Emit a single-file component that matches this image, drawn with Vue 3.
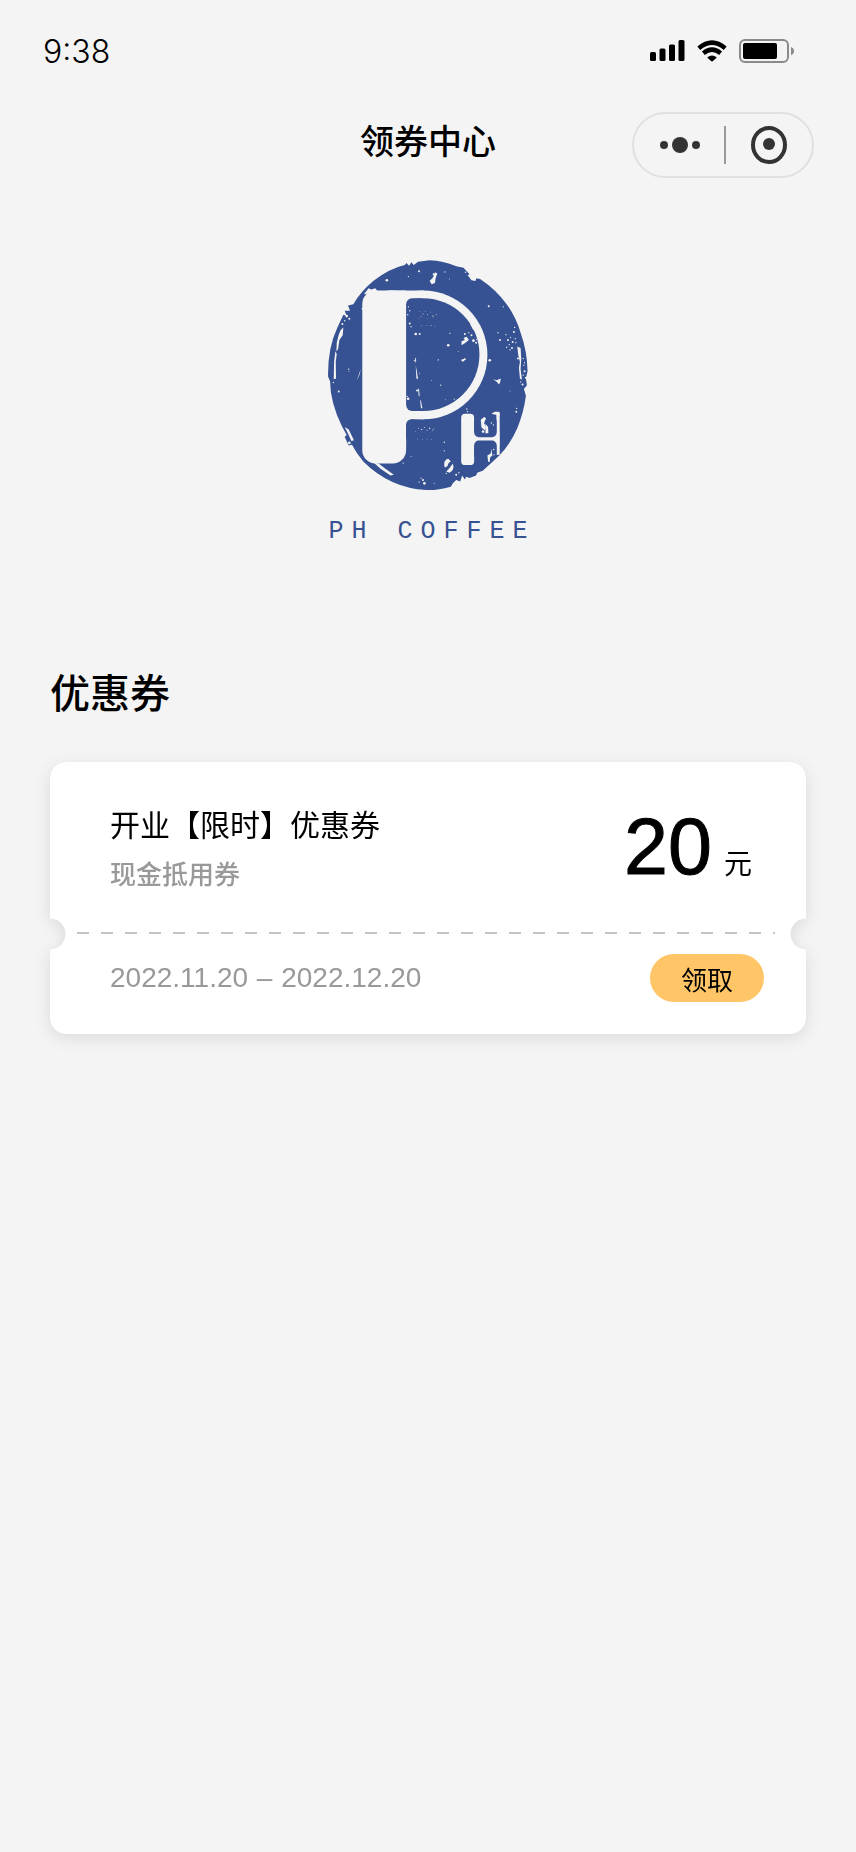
<template>
  <div class="page">
    <div class="status-bar">
      <span class="time">9:38</span>
      <div class="status-icons">
        <svg width="35" height="22" viewBox="0 0 35 22">
          <rect x="0" y="12" width="6" height="9" rx="1.5" />
          <rect x="9.5" y="8.5" width="6" height="12.5" rx="1.5" />
          <rect x="19" y="4.5" width="6" height="16.5" rx="1.5" />
          <rect x="28.5" y="0" width="6" height="21" rx="1.5" />
        </svg>
        <svg width="30" height="22" viewBox="0 0 30 22">
          <g fill="none" stroke="#000" stroke-width="4.4">
            <path d="M1.8 8.2 Q15 -3 28.2 8.2" />
            <path d="M6.4 13.2 Q15 6 23.6 13.2" />
          </g>
          <path d="M10.2 17.4 Q15 13.4 19.8 17.4 L16 21 Q15 21.8 14 21 Z" />
        </svg>
        <svg width="56" height="24" viewBox="0 0 56 24">
          <rect x="1" y="1" width="48" height="22" rx="5" fill="none" stroke="#8a8a8a" stroke-width="2" />
          <rect x="4" y="4" width="34" height="16" rx="2" />
          <path d="M52 8 Q55 9 55 12 Q55 15 52 16 Z" fill="#8a8a8a" />
        </svg>
      </div>
    </div>

    <header class="nav">
      <h1 class="nav-title">领券中心</h1>
      <div class="capsule">
        <button type="button" class="capsule-btn" aria-label="更多">
          <svg width="40" height="16" viewBox="0 0 40 16" fill="#333">
            <circle cx="4" cy="8" r="4" />
            <circle cx="20" cy="8" r="8" />
            <circle cx="36" cy="8" r="4" />
          </svg>
        </button>
        <span class="capsule-line"></span>
        <button type="button" class="capsule-btn" aria-label="关闭">
          <svg width="36" height="38" viewBox="0 0 36 38" fill="#333">
            <ellipse cx="18" cy="19" rx="16" ry="17" fill="none" stroke="#333" stroke-width="4" />
            <circle cx="18" cy="18" r="6" />
          </svg>
        </button>
      </div>
    </header>

    <main class="content">
      <div class="brand">
        <svg class="brand-mark" viewBox="54 43 602 696" role="img" aria-label="PH">
          <defs>
            <clipPath id="bowl">
              <rect x="310" y="120" width="240" height="420" />
            </clipPath>
          </defs>
          <!-- stamp -->
          <path
            fill="#365292"
            d="M360 44 Q400 46 440 62 L462 66 L478 84 L484 94 L500 98 L512 100 Q560 132 592 176 Q620 215 634 262 Q654 318 655 378 L650 400 L653 420 L644 432 L650 452 Q644 500 624 550 Q604 596 570 632 L520 678 L503 684 L500 692 L480 700 L470 696 L466 704 L458 692 L452 710 L440 706 L430 716 L424 726 Q380 738 350 736 Q240 730 160 650 Q138 624 126 600 L116 602 L104 576 L110 570 L96 545 Q60 470 60 408 L54 395 Q52 310 82 246 L100 208 L110 212 L104 196 L120 196 L114 180 L130 176 Q150 140 190 106 Q240 68 285 58 L290 52 L298 60 L305 50 L312 58 L325 48 Z"
          />
          <!-- bowl and stem -->
          <g fill="#f4f4f4">
            <circle cx="340" cy="329" r="194" clip-path="url(#bowl)" />
            <rect x="230" y="135" width="112" height="388" />
            <rect x="280" y="515" width="26" height="26" />
            <rect x="157" y="135" width="132" height="521" rx="40" />
            <rect x="240" y="135" width="49" height="470" />
          </g>
          <g fill="#365292">
            <circle cx="340" cy="328" r="170" clip-path="url(#bowl)" />
            <rect x="289" y="158" width="60" height="340" rx="18" />
            <rect x="289" y="523" width="36" height="70" rx="16" />
          </g>
          <!-- small monogram letter -->
          <g fill="#f4f4f4">
            <rect x="455" y="506" width="39" height="155" rx="12" />
            <rect x="486" y="560" width="84" height="44" />
            <rect x="561" y="502" width="10" height="128" />
            <path d="M546 506 L556 500 L569 500 L571 512 L562 510 Z" />
          </g>
          <g fill="#365292">
            <rect x="494" y="516" width="68" height="61" rx="14" />
            <rect x="494" y="587" width="68" height="54" rx="14" />
          </g>
          <!-- wear marks -->
          <g fill="#f4f4f4">
            <path d="M100 246 L98 270 L88 284 L84 312 L79 318 L80 292 L86 268 L92 254 Z" />
            <path d="M76 318 L80 326 L77 350 L78 400 L71 402 L72 350 Z" />
            <path d="M104 546 L116 554 L132 586 L124 588 L114 566 Z" />
            <path d="M192 654 L206 656 L230 674 L252 690 L242 692 L212 672 Z" />
            <path d="M376 80 L383 84 L378 98 L376 112 L366 116 L360 106 L370 96 Z" />
            <path d="M474 88 L486 86 L494 96 L502 94 L498 106 L486 104 Z" />
            <path d="M456 288 L466 284 L462 278 L472 274 L478 284 L468 292 L456 300 Z" />
            <path d="M552 402 L562 405 L574 400 L573 410 L569 418 L562 410 Z" />
            <path d="M624 304 L634 308 L636 340 L634 372 L638 404 L632 400 L629 368 L632 350 L627 330 Z" />
            <path d="M514 524 L524 516 L530 520 L524 534 L530 548 L526 556 L516 548 Z" />
            <path d="M528 536 L536 546 L537 564 L528 566 Z" />
            <path d="M534 632 L544 626 L546 612 L549 632 L542 638 L541 652 L536 650 Z" />
            <path d="M404 664 Q402 644 416 642 L424 650 Q416 652 414 664 L406 668 Z" />
            <path d="M430 656 Q436 676 420 684 L410 680 L420 670 Z" />
            <path d="M162 146 L176 128 L184 132 L196 128 L204 138 L180 144 Z" />
            <path d="M152 372 L149 388 L140 406 L146 390 Z" />
            <path d="M482 236 L494 238 L502 258 L490 252 Z" />
            <path d="M316 338 L319 339 L319 352 L317 352 Z" />
            <path d="M318 360 L321 376 L325 402 L320 400 L319 380 Z" />
            <path d="M325 430 L328 432 L330 454 L327 452 Z" />
            <path d="M331 464 L334 468 L338 490 L334 490 Z" />
            <circle v-for="(s, i) in specks" :key="i" :cx="s[0]" :cy="s[1]" :r="s[2]" />
          </g>
        </svg>
        <p class="brand-name">PH COFFEE</p>
      </div>

      <section>
        <h2 class="section-title">优惠券</h2>
        <div v-for="c in coupons" :key="c.id" class="coupon-wrap">
          <article class="coupon">
            <div class="coupon-top">
              <div>
                <h3 class="coupon-name">{{ c.name }}</h3>
                <p class="coupon-type">{{ c.type }}</p>
              </div>
              <p class="coupon-price"><span class="amount">{{ c.amount }}</span>元</p>
            </div>
            <div class="coupon-line"></div>
            <div class="coupon-bottom">
              <span class="coupon-date">{{ c.start }} <span class="dash">–</span> {{ c.end }}</span>
              <button type="button" class="claim-btn">领取</button>
            </div>
          </article>
        </div>
      </section>
    </main>
  </div>
</template>

<script setup>
import { ref } from 'vue'

const coupons = ref([
  { id: 1, name: '开业【限时】优惠券', type: '现金抵用券', amount: 20, start: '2022.11.20', end: '2022.12.20' }
])

// x, y, radius of the small chips in the stamp
const specks = [
  [231, 104, 4], [296, 93, 2], [328, 77, 3], [406, 79, 2], [420, 100, 1.5], [372, 86, 3],
  [538, 182, 3], [582, 184, 2], [110, 212, 4], [118, 220, 3], [97, 236, 3], [104, 226, 2],
  [296, 184, 2], [300, 196, 2], [294, 208, 2], [330, 198, 1], [340, 206, 1.5], [334, 214, 1.5],
  [348, 198, 1], [354, 208, 1.5], [362, 200, 1], [370, 212, 2], [380, 208, 1.5], [352, 220, 1],
  [336, 240, 1], [350, 240, 1], [364, 240, 1.5], [376, 242, 1], [300, 234, 3], [304, 244, 2],
  [318, 266, 4], [330, 266, 3], [326, 220, 1], [416, 300, 4], [386, 344, 2], [421, 264, 2],
  [446, 318, 1.5], [460, 345, 4], [466, 342, 3], [492, 286, 4], [500, 292, 3], [486, 270, 3],
  [466, 266, 3], [478, 262, 2], [502, 282, 2], [541, 345, 4], [526, 318, 2], [566, 262, 2],
  [572, 284, 3], [590, 268, 2], [596, 284, 3], [604, 276, 2], [610, 290, 3], [600, 298, 2],
  [592, 306, 2], [614, 260, 3], [618, 280, 2], [620, 292, 2], [608, 308, 3], [602, 314, 2],
  [616, 246, 2], [626, 340, 3], [642, 340, 2], [644, 360, 2], [646, 378, 3], [642, 390, 2],
  [650, 398, 3], [640, 418, 3], [634, 410, 2], [646, 352, 2], [621, 500, 3], [622, 490, 2],
  [602, 438, 1.5], [86, 439, 3], [116, 372, 2], [117, 378, 1.5], [70, 412, 2], [118, 594, 4],
  [295, 461, 4], [292, 454, 2], [393, 420, 2], [366, 406, 1.5], [434, 462, 2], [408, 464, 1.5],
  [330, 384, 1.5], [322, 436, 3], [314, 346, 2], [326, 550, 1.5], [336, 554, 2], [344, 548, 1.5],
  [352, 556, 1.5], [360, 550, 2], [368, 556, 1.5], [318, 560, 1], [324, 582, 1], [338, 584, 1],
  [352, 582, 1], [366, 584, 1], [372, 552, 1.5], [404, 592, 2], [404, 618, 2], [472, 492, 2],
  [474, 500, 2], [546, 534, 2], [552, 540, 2], [553, 614, 2], [554, 630, 2], [521, 560, 4],
  [340, 706, 3], [344, 716, 4], [328, 712, 2], [334, 700, 2], [280, 655, 2], [304, 634, 1.5],
  [440, 690, 3], [448, 684, 2], [410, 686, 2], [374, 716, 1.5], [468, 80, 2], [158, 190, 3]
]
</script>

<style>
body {
  background: #f4f4f4;
}
</style>

<style scoped>
.page {
  min-height: 100vh;
  background: #f4f4f4;
  color: #000;
  font-family: "Liberation Sans", "Noto Sans CJK SC", sans-serif;
}

h1,
h2,
h3,
p {
  margin: 0;
}

button {
  padding: 0;
  border: none;
  background: none;
  font-family: inherit;
  color: inherit;
  cursor: pointer;
}

svg {
  display: block;
}

/* Status bar */
.status-bar {
  display: flex;
  align-items: center;
  justify-content: space-between;
  height: 102px;
  padding: 0 61px 0 43px;
}

.time {
  font-family: Inter, "Liberation Sans", sans-serif;
  font-size: 32px;
  font-weight: 300;
}

.status-icons {
  display: flex;
  align-items: center;
  gap: 12px;
}

/* Nav */
.nav {
  display: grid;
  grid-template-columns: 1fr auto 1fr;
  align-items: center;
  padding: 10px 42px 0;
}

.nav-title {
  grid-column: 2;
  padding-bottom: 6px;
  font-size: 34px;
  line-height: 48px;
  font-weight: 500;
}

.capsule {
  justify-self: end;
  display: flex;
  align-items: center;
  box-sizing: border-box;
  width: 182px;
  height: 66px;
  padding-left: 3px;
  border: 2px solid #e0e0e0;
  border-radius: 33px;
}

.capsule-btn {
  flex: 1;
  display: flex;
  justify-content: center;
}

.capsule-line {
  width: 2px;
  height: 38px;
  background: #999;
}

.content {
  padding: 82px 50px;
}

/* Brand */
.brand {
  display: flex;
  flex-direction: column;
  align-items: center;
}

.brand-mark {
  width: 200px;
  height: 231px;
}

.brand-name {
  margin-top: 25px;
  padding-left: 8px;
  font-family: "Liberation Mono", monospace;
  font-size: 25px;
  line-height: 32px;
  letter-spacing: 8px;
  color: #365292;
}

/* Coupons */
.section-title {
  margin-top: 118px;
  font-size: 40px;
  line-height: 56px;
  font-weight: 500;
}

.coupon-wrap {
  margin-top: 40px;
  filter: drop-shadow(0 4px 8px rgba(0, 0, 0, 0.1));
}

.coupon {
  padding: 40px 42px 32px 60px;
  border-radius: 16px;
  background: #fff;
  /* round notches at both ends of the dashed line */
  mask-image:
    radial-gradient(circle at 0 calc(100% - 100px), transparent 15px, #000 16px),
    radial-gradient(circle at 100% calc(100% - 100px), transparent 15px, #000 16px);
  mask-composite: intersect;
}

.coupon-top {
  display: flex;
  justify-content: space-between;
  height: 130px;
}

.coupon-name {
  font-size: 30px;
  line-height: 48px;
  font-weight: 400;
}

.coupon-type {
  font-size: 26px;
  line-height: 50px;
  font-weight: 500;
  color: #999;
}

.coupon-price {
  padding-right: 12px;
  font-size: 28px;
  line-height: 90px;
}

.amount {
  margin-right: 12px;
  font-size: 79px;
  -webkit-text-stroke: 1px #000;
}

.coupon-line {
  height: 2px;
  margin: 0 -11px 0 -33px;
  background: repeating-linear-gradient(90deg, #c4c4c4 0 12px, transparent 12px 24px);
}

.coupon-bottom {
  display: flex;
  align-items: center;
  justify-content: space-between;
  margin-top: 20px;
}

.coupon-date {
  font-size: 28px;
  color: #999;
}

.dash {
  margin: 0 1px;
}

.claim-btn {
  width: 114px;
  height: 48px;
  border-radius: 24px;
  background: #ffc566;
  font-size: 26px;
}
</style>
